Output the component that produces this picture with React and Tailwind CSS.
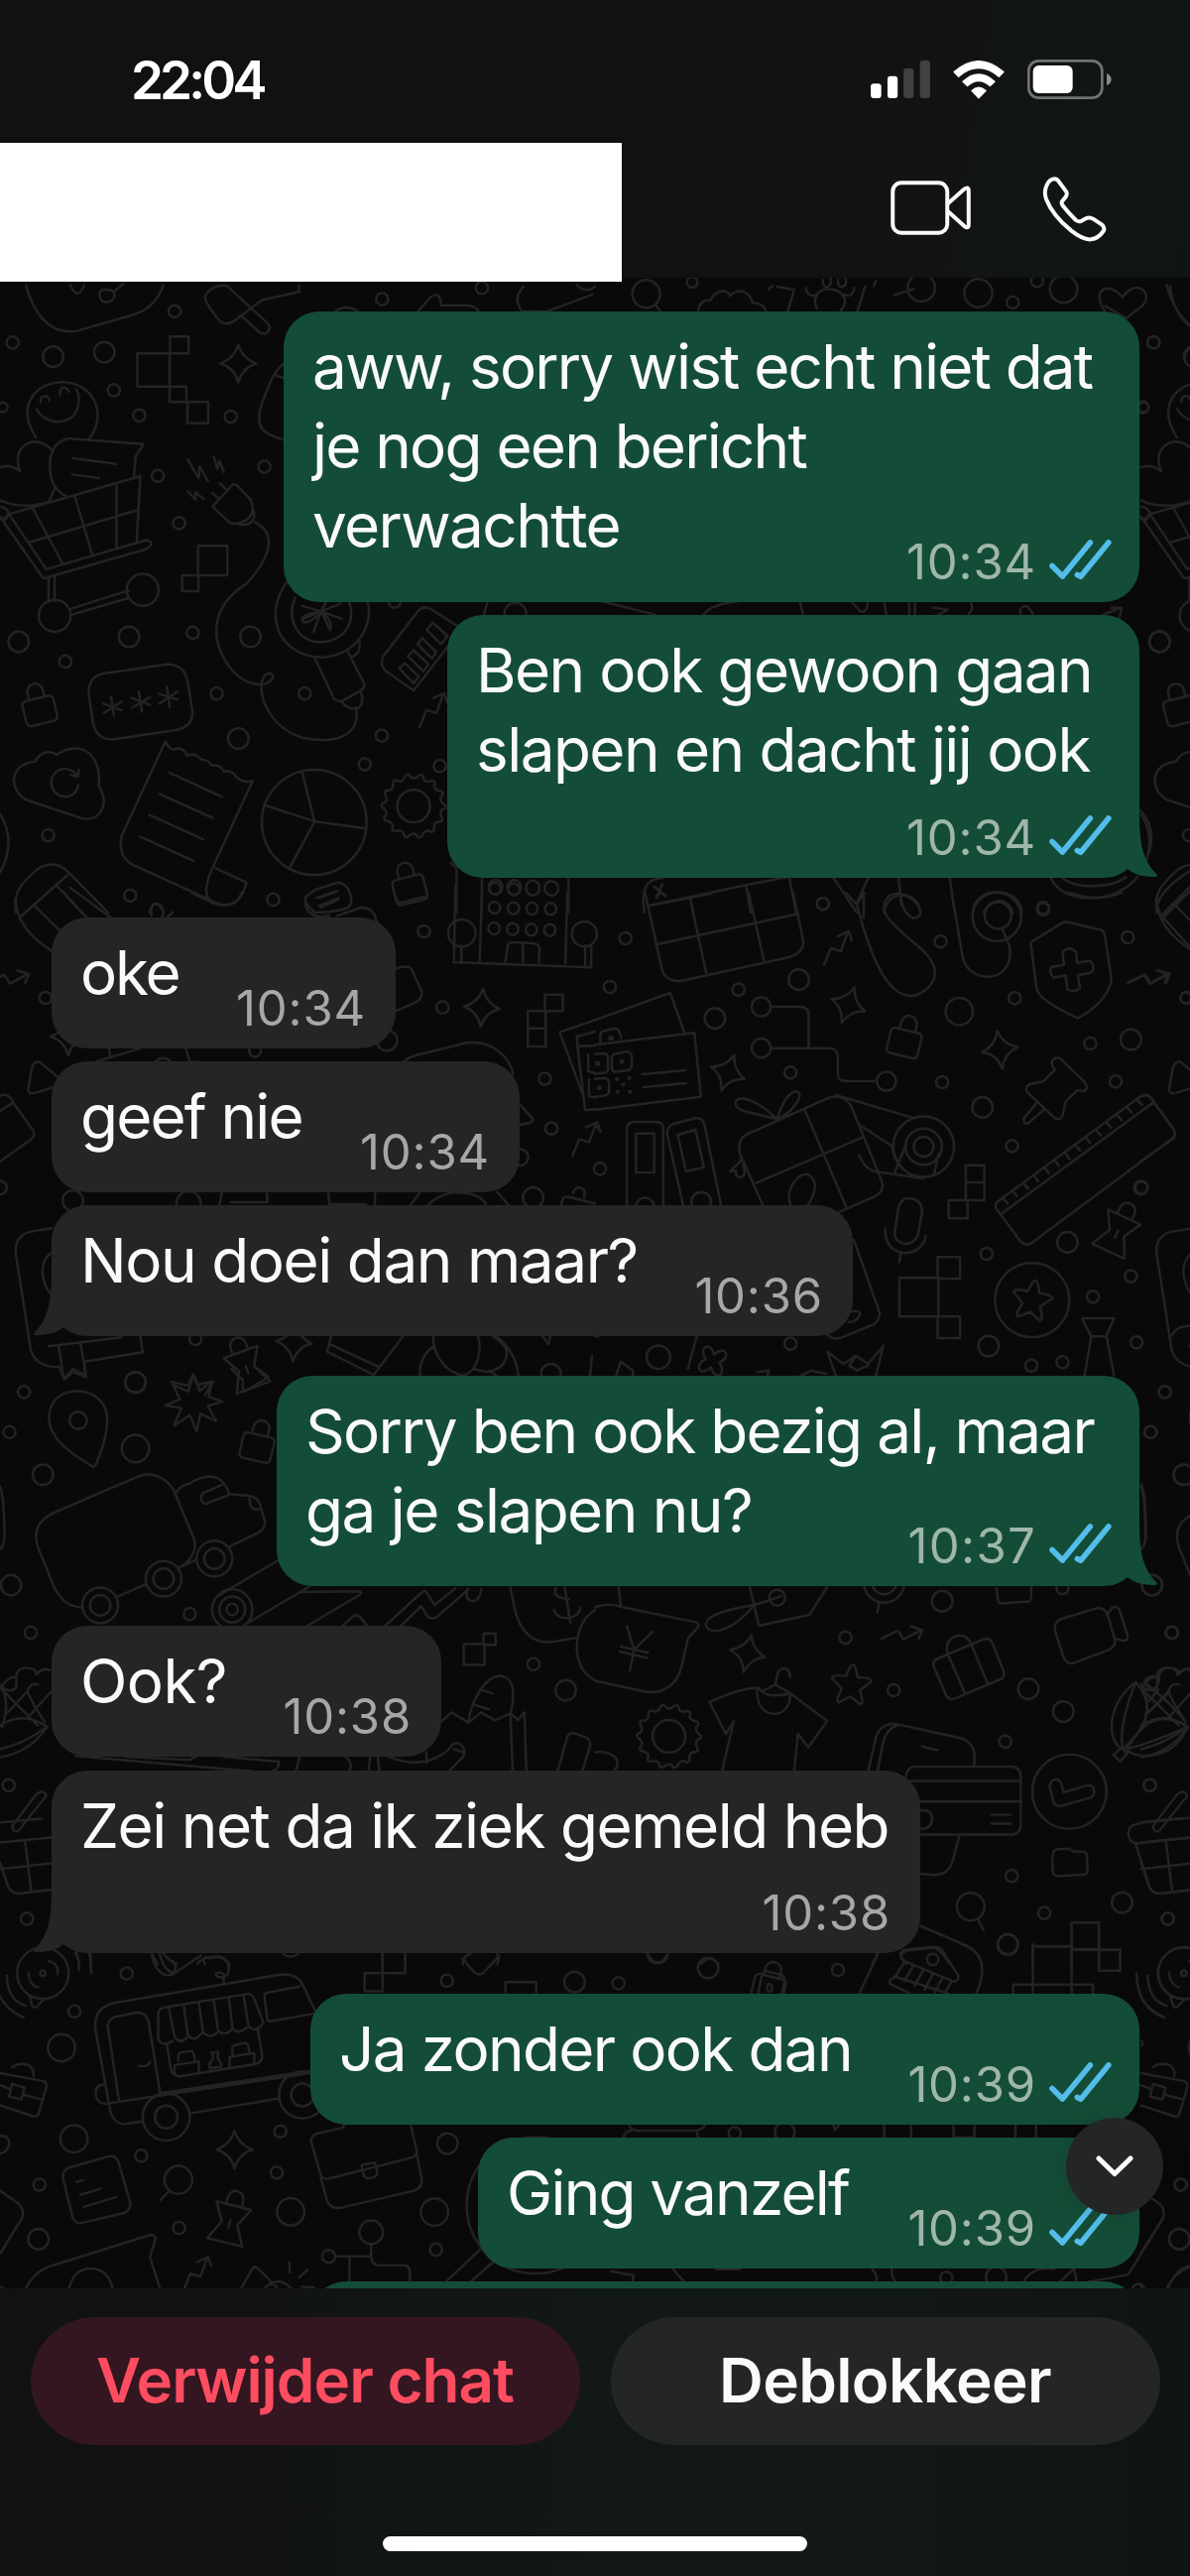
import React from "react";

/* ---------- wallpaper ---------- */

// Each wallpaper tile has its own origin and drawing scale.
const TILES = {
  a: { x: 0, y: 280, sx: 2.6133, sy: 2.45 },
  b: { x: 600, y: 280, sx: 2.6133, sy: 2.45 },
  c: { x: 0, y: 900, sx: 2.6133, sy: 3 },
  d: { x: 600, y: 900, sx: 2.6133, sy: 3 },
  e: { x: 0, y: 1380, sx: 2.6133, sy: 2.6133 },
  f: { x: 600, y: 1380, sx: 2.6133, sy: 2.6133 },
  g: { x: 0, y: 1960, sx: 2.6133, sy: 2.4615 },
  h: { x: 600, y: 1960, sx: 2.6133, sy: 2.4615 },
};

const SHAPES = {
  sparkle: "M0 -19Q4 -5 18 0Q4 4 0 19Q-4 4 -18 0Q-4 -5 0 -19Z",
  lock: "M-11 -8H11Q16 -8 16 -3V13Q16 18 11 18H-11Q-16 18 -16 13V-3Q-16 -8 -11 -8ZM-8 -8V-15A8 8 0 0 1 8 -15V-8",
  trend: "M-14 17L-7 0L3 3L10 -16M0 -12L11 -17L14 -8",
  pin: "M-18 -18H18L8 0L18 20H-18L-8 0ZM-8 -18V-25A8 8 0 0 1 8 -25V-18M0 -3V5",
  lens: "M14 0A14 14 0 1 1 -14 0A14 14 0 1 1 14 0ZM7 12L13 24",
  clover: "M0 -6C-8 -20 -18 -8 -7 0C-18 10 -8 20 0 7C8 20 18 10 7 0C18 -8 8 -20 0 -6Z",
  star: "M0 -20Q2 -21 6 -8Q19 -9 20 -5L9 5Q15 18 11 19L0 12L-11 19Q-15 18 -9 5L-20 -5Q-19 -9 -6 -8Q-2 -21 0 -20Z",
};

// Gear outline: a ring of rounded teeth.
const TEETH = 14;
const polar = (r, i) => {
  const a = (i / TEETH) * Math.PI * 2;
  return `${(r * Math.sin(a)).toFixed(2)} ${(-r * Math.cos(a)).toFixed(2)}`;
};
const GEAR =
  `M${polar(28, 0)}` +
  Array.from({ length: TEETH }, (_, i) => `Q${polar(28.5, i + 0.25)} ${polar(31.5, i + 0.4)}Q${polar(33.5, i + 0.6)} ${polar(31, i + 0.7)}Q${polar(28, i + 0.8)} ${polar(28, i + 1)}`).join("") +
  "Z";

const STAMPS = [
  ["sparkle", "a", 628, 212, 0], ["lock", "a", 102, 1058, -14], ["lock", "a", 1077, 1500, -14],
  ["trend", "a", 1142, 1068, 0], ["trend", "c", 25, 262, 42], ["lens", "b", 135, 40, -10],
  ["sparkle", "c", 180, 435, 0], ["sparkle", "c", 1270, 348, 4],
  ["sparkle", "d", 667, 340, 20], ["sparkle", "d", 350, 545, 20], ["sparkle", "d", 1067, 475, -8],
  ["lock", "d", 818, 440, 14], ["trend", "d", 640, 168, 0], ["trend", "d", 1460, 262, 42],
  ["trend", "c", 1545, 745, 0], ["pin", "d", 1375, 1030, 25], ["pin", "c", 650, 1440, -20],
  ["sparkle", "c", 775, 1360, 4], ["clover", "d", 310, 1415, 15], ["star", "d", 1152, 1232, 10],
  ["lock", "e", 680, 195, 13], ["sparkle", "f", 402, 750, 12], ["star", "f", 675, 832, 5],
  ["trend", "f", 812, 702, 42], ["lens", "f", 990, 1417, 0], ["lens", "g", 470, 585, 70],
  ["sparkle", "g", 618, 510, 0], ["pin", "g", 605, 692, 14], ["trend", "g", 520, 818, 0],
  ["lock", "h", 460, 100, 14],
];

// [tile, x, y, radius] in tile units
const RINGS = [
  ...[[460,83,16],[33,160,16],[140,195,27],[275,184,27],[300,278,16],[367,340,16],[608,343,16],[416,489,16],[472,606,16],[697,467,16],[7,320,13],[49,899,27],[340,887,27],[172,948,16],[508,877,16],[660,887,27],[571,1027,16],[803,1027,16],[628,1138,27],[1006,1131,16],[961,1202,16],[1159,1206,16],[127,1377,16],[343,1526,16],[720,1536,16],[1007,53,16],[1270,25,16],[1040,800,16],[1358,830,29],[1090,1305,43],[144,835,42],[376,771,42]].map((p) => ["a", ...p]),
  ...[[1101,61,16],[256,11,14],[1010,38,37],[860,25,36],[1235,28,36],[1165,8,16],[1472,160,16],[1443,320,16],[1488,899,27],[600,1546,16],[1181,1556,16]].map((p) => ["b", ...p]),
  ...[[1117,117,16],[1166,347,16],[1436,563,16],[1453,713,16],[1405,922,27],[1020,447,27],[192,931,27],[357,1480,27],[515,1350,16],[120,318,16],[0,892,18],[672,478,16],[497,940,32],[1370,800,22],[430,530,26],[1452,1455,26],[1217,122,36],[1540,125,33]].map((p) => ["c", ...p]),
  ...[[80,138,16],[39,285,16],[378,293,16],[537,263,27],[316,380,27],[601,34,16],[911,148,16],[1181,50,16],[1404,135,16],[1106,319,16],[960,359,36],[1305,456,16],[1412,444,27],[1372,571,16],[1557,318,14],[515,544,16],[915,573,16],[1021,649,27],[1099,766,16],[1440,892,16],[1245,1057,27],[1032,1092,16],[1412,1160,16],[1312,1222,16],[1427,1360,16],[1037,1371,27],[1150,1430,16],[1232,1420,16],[515,1364,16],[167,1405,31],[13,835,16],[438,345,25],[438,470,25],[768,570,25],[1059,73,64],[1062,69,35],[866,768,80],[866,768,48],[866,768,26],[1152,1232,98],[132,950,24],[280,935,26]].map((p) => ["d", ...p]),
  ...[[63,61,16],[25,167,16],[357,36,27],[206,136,23],[357,210,36],[113,279,27],[29,570,27],[81,695,16],[500,646,16],[23,1097,16],[71,1449,16],[264,623,47],[264,623,27],[431,553,47],[431,553,27],[565,500,47],[565,500,27],[612,634,53],[612,634,34],[612,634,15],[1406,778,16],[1491,847,27]].map((p) => ["e", ...p]),
  ...[[1502,61,16],[1465,167,16],[1552,279,27],[1468,570,27],[1521,695,16],[915,612,27],[660,708,16],[787,847,16],[1142,843,27],[1234,903,27],[1081,982,16],[1462,1097,16],[1098,1336,16],[1184,1434,16],[1389,1406,27],[1510,1449,16],[1088,1517,27],[1250,1114,98],[1232,578,16],[480,603,21],[762,562,54],[762,562,32],[195,968,43]].map((p) => ["f", ...p]),
  ...[[334,73,16],[196,167,16],[162,257,36],[195,483,36],[104,597,16],[372,525,16],[739,465,16],[729,567,16],[766,664,36],[101,732,27],[472,704,16],[1178,91,16],[1514,94,27],[1179,495,27],[1145,665,36],[1149,758,16],[978,715,31],[866,775,17],[438,429,62],[438,429,30],[797,374,62],[797,374,30],[113,72,7],[113,72,68],[1410,648,180]].map((p) => ["g", ...p]),
  ...[[62,97,16],[298,59,27],[165,22,27],[640,64,16],[368,469,16],[500,467,26],[926,828,16],[1057,826,27],[1544,597,16],[1540,732,27],[1552,72,7],[1552,72,68],[890,38,15],[1088,0,26],[1432,858,16]].map((p) => ["h", ...p]),
];

const LINES = {
  a: [
    "M68 18C90 90 130 140 200 132L350 92Q410 75 430 18M185 18Q205 60 222 18M262 40Q265 25 285 30Q302 30 302 45Q295 62 278 60Q264 60 262 40M300 35L325 15",
    "M598 20Q560 15 540 45Q538 60 580 108Q597 120 620 105L690 55L788 35V20M598 20L708 115Q716 130 700 138Q688 140 680 132L634 92",
    "M885 82Q910 65 942 82M1102 82L1135 48Q1160 30 1162 68H1230Q1255 70 1262 84M1380 22Q1350 50 1375 82L1440 84L1560 42M1520 18Q1545 40 1568 22",
    "M448 145H497V187H448ZM362 187H447V269H362ZM447 269H491V307H447ZM494 307H549V359H494ZM522 662H599V735H522ZM480 735H523V774H480Z",
    "M95 395C40 315 95 258 165 258C240 258 288 330 235 398M107 307Q105 292 120 292Q130 295 130 303M158 290Q155 273 170 271Q180 274 182 282M96 325C130 375 220 365 206 285L200 275",
    "M0 468Q30 460 53 478C25 410 100 380 140 430M0 550Q60 575 130 552L145 518",
    "M180 397L378 411L358 440L353 490M180 397C120 410 130 470 135 495Q145 530 180 542M192 446L306 460M190 486L261 495",
    "M0 590L112 740Q118 745 125 740L380 672Q400 665 398 655Q390 645 378 650L122 720L24 584L370 490L360 652M88 572L165 706M198 542L243 684M307 512V664M76 654L362 574M0 565Q25 570 22 585Q10 600 0 595M24 584L12 600",
    "M186 818L340 772M190 832L336 792M128 740V800M144 738V798",
    "M495 450L524 495L526 466L548 502M563 442L573 472L578 452L590 480M495 528L515 548L516 530L536 546M580 508L598 524M560 532L575 544M560 565L612 512Q618 508 626 514L660 548Q675 580 650 598Q620 612 605 605ZM628 608C660 615 675 600 668 574M672 604C730 630 715 690 650 755C560 810 555 880 590 940C620 990 660 1010 700 1003C730 990 720 970 700 980C670 1010 700 1110 800 1137C900 1155 950 1120 938 1065",
    "M747 212C720 235 715 250 690 310C670 370 690 385 747 400M725 240L747 248",
    "M755 752C690 840 740 935 848 938C950 930 985 850 968 800M778 790C755 840 780 900 848 900C910 895 940 850 918 795M846 824L795 810M846 824L800 842M846 824L826 875M846 824L870 870Q880 850 846 824M846 824L900 842M846 824L897 805M846 824L860 800M846 824Q780 835 800 850Q820 855 846 824",
    "M830 940L880 1040Q890 1050 905 1044L950 1020Q965 1010 958 1000L915 920M948 900Q950 930 928 936M900 1046Q915 1070 945 1062Q960 1050 952 1026",
    "M1205 860L1135 818Q1115 808 1100 825L1010 935Q1000 955 1015 970L1090 1020L1185 905M1052 965L1067 952L1104 985L1090 1002ZM1075 935L1090 920L1130 955L1115 972ZM1100 905L1113 890L1150 925L1138 940ZM1125 870L1140 852L1180 885L1162 905Z",
    "M270 978L440 955Q488 955 495 1000L507 1070Q510 1110 460 1118L300 1140Q255 1142 245 1100L234 1030Q232 985 270 978ZM293 1035L300 1082M272 1052L320 1068M320 1047L274 1075M366 1022L374 1072M346 1038L395 1055M395 1036L348 1062M440 1010L447 1060M419 1028L468 1042M468 1022L420 1052",
    "M70 1290C20 1265 25 1200 92 1195Q115 1160 150 1178C210 1140 270 1175 260 1255C290 1300 265 1345 215 1335ZM206 1253C200 1295 135 1290 135 1245C140 1205 190 1205 205 1232M208 1215L205 1232L186 1228",
    "M436 1145L320 1380Q310 1430 350 1450L580 1548Q620 1555 640 1520L650 1494L568 1458M436 1145Q450 1172 465 1163Q485 1160 492 1180Q515 1172 530 1190Q550 1190 558 1205Q580 1200 590 1220Q610 1215 622 1232Q640 1250 666 1242L560 1458Q535 1510 548 1530Q560 1550 590 1550M446 1222L585 1282M420 1275L560 1334M394 1327L535 1387M369 1380L509 1440",
    "M966 1345A138 130 0 1 1 690 1345A138 130 0 1 1 966 1345M829 1343L796 1221M829 1343L702 1304M829 1343L765 1455M829 1343L960 1360",
    "M0 1325Q45 1390 0 1470M42 1568C35 1520 50 1500 100 1460Q145 1435 180 1468L285 1568M90 1548L182 1472M150 1502L215 1568M395 1568Q400 1540 418 1548L428 1560",
    "M830 1512L885 1495Q915 1490 925 1530Q930 1555 905 1560L870 1566L830 1568Q800 1545 805 1530ZM834 1532L885 1515M842 1552L892 1532",
    "M1188 1445L1203 1458V1568M1270 1480V1568M1498 1480V1568M1288 1505a16 16 0 1 0 36 0a16 16 0 1 0 -36 0M1337 1506a16 16 0 1 0 36 0a16 16 0 1 0 -36 0M1386 1507a16 16 0 1 0 36 0a16 16 0 1 0 -36 0M1435 1508a16 16 0 1 0 36 0a16 16 0 1 0 -36 0M1275 832L1285 800",
  ],
  b: [
    "M272 80C275 60 290 55 305 55C320 25 355 30 355 45C385 20 410 40 415 62C430 60 448 70 450 82M458 28L468 20M480 22L525 30L508 82M712 22L692 82M735 20L740 8M585 75C570 50 590 25 620 28C655 30 670 60 648 80M556 25Q560 50 582 42M683 25Q680 50 658 42M600 5Q600 25 612 22Q625 20 620 0M640 5Q640 25 652 22Q665 20 660 0M790 42L840 28",
    "M1345 85C1305 30 1350 5 1390 48C1430 -5 1480 45 1435 75L1400 100L1345 70M1515 20Q1525 90 1568 120M1568 175Q1550 185 1556 205",
    "M20 800L158 832M285 832Q310 805 375 800M540 800L548 832M678 802L700 825Q720 825 718 802M762 802L768 832M828 802V832M843 802V832M890 815L930 820L905 832M985 830Q1000 815 990 802M1122 832Q1115 810 1140 812L1155 832M1320 840L1345 830L1388 815L1360 815M1388 815L1382 840",
    "M1437 1315Q1480 1360 1460 1420M1200 1480C1230 1550 1370 1550 1430 1480M1230 1480C1260 1510 1360 1510 1400 1480M1480 1568Q1475 1520 1568 1465M1500 1568L1568 1505",
    "M130 1568C120 1500 140 1485 180 1482M137 1552L398 1500L520 1478M250 1530L260 1568M398 1500L410 1568M512 1482L530 1568M155 1503L186 1527M178 1498L162 1532M628 1482L690 1568M720 1482L690 1545M935 1482L948 1568M800 1482L808 1550M762 1568C770 1510 850 1510 858 1568M995 1568C1000 1500 1120 1500 1125 1568M1025 1568C1040 1530 1090 1530 1100 1568",
  ],
  c: [
    "M40 20Q45 110 135 175M55 72L120 5M90 38L160 118M165 -5L228 75M185 -15L292 75M400 70C390 20 430 25 430 60L428 75M456 58L440 75",
    "M505 0L560 30Q620 55 637 0M805 15C800 70 840 80 865 68L868 75M840 15L890 -4M845 45L892 20M888 70L950 45Q985 45 990 80L1040 180M1042 230Q1080 215 1086 235L1112 300Q1112 325 1090 335L1042 358",
    "M1038 0L1045 20Q1050 35 1070 27L1118 12M1200 -20L1196 210L1558 226V160M1270 0L1264 208M1495 0L1490 214M1216 160V208M1332 208L1338 160Q1340 148 1355 150L1405 153Q1420 155 1422 170L1420 212M1378 152V210M1542 160V222",
    ...[[1303,45],[1353,47],[1402,48],[1451,49],[1302,108],[1351,110],[1400,112],[1449,113],[1304,-12],[1354,-10]].map(([x, y]) => `M${x - 15} ${y}a15 18 0 1 0 30 0a15 18 0 1 0 -30 0`),
    "M1436 308H1483V358H1436ZM1391 358H1438V410H1391ZM1391 410H1438V465H1391Z",
    "M1568 385L1475 422L1535 608M1568 420L1520 435L1522 465L1568 462M1522 465L1542 658L1568 655M1550 490V540L1568 545M1552 565V615L1568 620",
    "M1063 512Q1075 495 1120 485L1230 454C1300 445 1345 500 1352 550M1370 640L1402 682Q1408 692 1395 696L1370 702",
    "M150 555L105 512Q92 508 85 525L74 595Q75 612 95 605L150 585M0 615Q20 600 35 635L88 720Q95 735 80 748L0 812M0 660L35 635M290 495L288 470M250 512L372 470M490 472L500 510L525 512",
    "M578 944L585 907M608 936H705L703 907M865 908L868 944M868 942H965M988 908V944M1082 944L1105 908M1128 944Q1160 910 1200 907Q1260 905 1280 940L1278 944M1310 905L1340 944M1510 908Q1520 880 1540 900L1540 922M1480 944Q1480 915 1500 920L1568 940",
    "M135 1015L80 1025Q35 1040 42 1095L78 1360C80 1410 110 1440 160 1433M135 1090Q110 1110 112 1150Q115 1190 135 1215M128 1372L320 1345M222 1418L376 1390L370 1342M155 1372L168 1470L192 1440L227 1460L212 1362",
    "M873 1342L862 1388L985 1458L1062 1342M868 1365L998 1434M1142 1342C1140 1390 1170 1450 1220 1460C1260 1450 1270 1380 1260 1342M1145 1370Q1105 1400 1106 1462M1300 1342Q1340 1370 1335 1400C1330 1440 1290 1460 1250 1440M1310 1344Q1360 1390 1366 1460M1290 1445L1310 1462M1430 1342L1445 1365L1450 1342M1560 1400L1555 1462",
    "M452 1480L495 1490L508 1458L522 1488L562 1478L540 1520",
  ],
  d: [
    "M132 0L175 225Q185 275 235 265L500 198Q555 185 548 140L522 0M140 40L308 2M250 15L293 242M405 0L445 205M160 157L535 64M162 10L172 0L186 8",
    "M660 0L690 35Q740 260 800 300Q840 330 880 285Q920 235 860 170C770 85 740 50 775 10Q795 -5 820 10C860 30 870 75 840 77Q810 65 805 5M690 35L710 0M708 75V0",
    "M940 0L968 190C980 280 1110 280 1092 160L1073 108M1250 0Q1320 30 1388 0",
    "M1568 165L1495 72Q1470 30 1485 0M1500 72L1568 -5",
    "M1148 150L1230 92Q1240 86 1250 90L1330 112Q1342 115 1343 128L1360 250C1365 300 1320 350 1272 380C1220 350 1165 320 1163 285ZM1232 180Q1250 158 1268 180L1270 212L1302 206Q1315 212 1313 232Q1312 245 1272 248L1278 288Q1262 305 1245 292L1240 250L1208 257Q1195 240 1202 225L1236 218Z",
    "M465 345H540Q563 345 563 370V468M465 470H615Q640 470 640 498V550Q640 570 665 570H742",
    "M0 385L198 303L235 422M0 460L262 424L279 617L0 656M14 455V430Q14 420 25 418L52 410Q65 410 69 440M125 549L238 537M128 588L240 576M0 488L22 486Q34 486 34 500V535Q34 545 20 545L0 548M50 488L85 480Q97 482 97 500V525Q95 537 82 538L52 542Q44 540 44 525V500Q44 490 50 488M0 563L25 560Q37 562 37 575V600Q37 612 22 614L0 617",
    "M68 507h6v6h-6ZM4 514h6v6h-6ZM8 587h6v6h-6ZM38 437h8v6h-8ZM56 562h4v4h-4ZM88 558h4v4h-4ZM72 578h4v4h-4ZM58 600h4v4h-4ZM90 600h4v4h-4Z",
    "M84 944V715Q84 693 105 693H160Q180 693 180 715V944M108 728H156V846H108ZM232 944L190 730Q190 705 210 698L265 682Q283 680 288 700L332 944M218 732L265 717L287 830L240 843ZM0 700L15 722",
    "M480 685C420 665 370 665 370 635C375 610 420 620 480 685C495 625 520 590 538 605C545 620 520 665 480 685M442 944L382 790Q372 745 405 728L620 618Q655 610 675 645L755 870Q765 905 735 920L645 965M552 655L662 950M425 878L705 740M385 800L382 815Q360 835 356 843L372 840Q368 862 385 860Q400 855 390 822M515 944C500 890 540 845 560 852C595 870 575 920 562 944",
    "M635 612L835 680M697 702L785 768M695 792Q715 845 750 845L866 864M790 845L820 760M800 815Q782 790 785 768M905 790L893 855",
    "M790 1025L800 950Q810 920 832 925Q862 930 862 965L852 1030Q845 1062 815 1062Q788 1055 790 1025M765 1015C760 1110 860 1110 872 1038M806 1090L802 1117",
    "M977 824H1026V876H977ZM977 876H1026V930H977ZM932 930H982V985H932ZM903 1102H962V1167H903ZM802 1165H905V1282H802ZM903 1282H962V1347H903Z",
    "M1060 935L1435 618Q1455 605 1468 625L1525 715Q1533 730 1520 745L1150 1060Q1135 1070 1122 1055L1060 960Q1050 948 1060 935ZM1072 970L1470 635M1075 925L1088 940M1102 903L1112 918M1130 880L1142 895M1158 857L1168 872M1185 833L1196 848M1212 810L1222 825M1238 785L1250 805M1265 762L1278 780M1292 740L1305 757M1320 717L1332 733M1348 695L1360 710M1375 672L1388 688M1402 650L1415 665M1430 628L1442 642",
    "M1205 508Q1220 490 1232 508L1290 572Q1302 590 1290 600L1270 598L1240 632L1232 675Q1225 690 1212 682L1138 602Q1132 590 1145 580L1182 570L1212 535Q1200 520 1205 508M1163 638L1130 682Q1128 700 1140 698L1185 655",
    "M682 1050L750 1270Q750 1295 735 1305L650 1345Q625 1355 612 1335M670 1268Q700 1260 698 1275Q690 1300 668 1298",
    "M1284 1290Q1284 1287 1290 1287H1368L1347 1342H1308ZM1308 1342L1290 1462M1348 1342L1368 1462",
    "M1568 1310Q1530 1310 1520 1340",
    "M0 1342L8 1342M268 1342L245 1440M55 1462L68 1418L100 1445V1462M612 1388L635 1462M612 1388L655 1425L688 1400L720 1425L760 1370L740 1462M688 1400L670 1430L690 1445L720 1430M540 1462L570 1445L610 1455M428 1450L458 1445L455 1462",
  ],
  e: [
    "M243 257C200 230 130 190 129 130C130 75 170 58 206 58C245 60 280 85 283 130C283 180 265 220 253 252Q248 260 243 257Z",
    "M510 14L526 58L559 32L550 74L586 86L548 98L570 138L528 118L518 165L500 122L458 150L478 104L436 96L474 80L456 42L496 60Z",
    "M218 630C180 625 165 615 145 580L100 470C85 420 105 400 140 380L360 285C400 265 440 290 458 320L512 450C520 480 500 510 472 524M465 325Q475 308 500 302C550 270 590 280 604 330L660 335Q680 340 685 358L698 400Q700 420 680 432L605 468M534 328L588 304M534 328Q525 340 535 352Q545 360 552 352L604 332M658 342Q655 372 682 370M470 524L518 503M306 602L386 567",
    "M732 505L575 598M655 668L815 574M792 588L950 586Q955 590 945 597L805 680",
    "M900 680L930 652Q940 645 950 655L970 680M1012 680L1110 590Q1120 582 1125 590L1145 622L1200 578M1052 682L1110 625L1125 650Q1135 662 1150 655L1235 580M1232 580Q1225 610 1245 612Q1265 612 1268 580",
    "M1345 575L1358 640C1375 700 1410 722 1450 720L1523 708M1568 635Q1520 665 1520 740Q1525 800 1568 820M1530 628C1525 665 1465 665 1460 635M1465 578C1455 600 1480 605 1500 607M1488 575L1503 668",
    "M1222 725H1277V780H1222ZM1274 697H1306V727H1274ZM1162 930L1190 905L1235 932L1268 905L1304 926L1345 908L1365 925L1382 905L1387 1058M1345 908L1351 1058M1235 930C1240 880 1280 800 1325 810C1360 820 1355 870 1345 908M1265 845L1298 855M1250 885L1288 897",
    "M1025 1022Q1120 1060 1185 1000Q1190 985 1210 987Q1230 1000 1222 1020L1185 1058M1124 1010V1038M1195 1002L1222 1010M995 1022L1000 1058M975 1022L972 1058M790 1022L780 1058M910 1022Q930 1035 922 1058M1470 1058L1495 970Q1500 955 1520 962L1545 972Q1560 980 1553 1000L1535 1058",
    "M200 1020L660 1060M330 1022L500 1030L515 1022M590 1022L735 1035Q735 1055 720 1058",
    "M0 1195L110 1185M0 1248L135 1235M0 1300L20 1360Q30 1385 55 1382L135 1372M0 1318L135 1303M66 1245L82 1375M32 1205L95 1122Q115 1105 122 1125L50 1215Q35 1225 32 1205M0 310Q10 330 12 440Q10 470 0 475",
    "M198 1540Q208 1550 208 1568M235 1540L240 1568M400 1540L415 1568M430 1540Q445 1560 465 1568M520 1568C540 1540 590 1545 605 1568M1008 1540V1568M1068 1540V1568M1220 1568Q1220 1545 1240 1542M1310 1542Q1318 1550 1310 1568M748 1542Q765 1555 785 1542M158 0L170 28L192 8L227 22L222 0M610 0L640 30V62L708 22L680 0",
    "M0 830C20 860 20 900 5 945M0 840L100 940M5 840Q15 812 42 812Q45 785 72 788Q98 790 95 805Q115 785 132 795M5 840Q30 855 42 840Q45 820 42 812M72 850L20 905M72 850Q80 825 100 832M72 850Q90 890 118 930M72 920L135 850M0 940Q60 900 124 943Q80 1010 0 1023M0 1002Q60 990 124 943",
  ],
  f: [
    "M0 628Q40 615 72 628L268 668Q278 675 268 685L245 710L228 785C215 840 170 858 130 850L0 822M62 575L68 625M84 678L103 740L152 692M103 740L92 795M68 732L140 748M66 745L137 762",
    "M408 575L432 677L565 648L612 575M480 603L420 622C340 635 290 650 292 675C300 705 360 695 420 622M480 603L490 598M748 618L744 642M1058 578L1062 610Q1063 618 1070 618L1145 613Q1150 612 1150 575",
    "M1225 660L1325 630Q1345 630 1352 650L1370 715Q1372 730 1355 740L1260 776Q1242 778 1235 760L1212 690Q1210 668 1225 660M1348 650L1362 630Q1375 622 1382 635L1404 705Q1405 718 1390 716L1370 710",
    "M892 782Q890 770 900 765L1025 712Q1040 708 1047 722L1078 800Q1080 812 1068 818L945 870Q930 872 925 860ZM930 752Q920 715 950 705Q975 695 990 722M930 752L975 855M990 722L1035 830",
    "M475 832L482 800C490 785 515 785 514 812M475 832L440 850M475 832L515 855M302 878C340 860 390 842 430 840L440 850Q460 868 515 855L612 928L562 997L535 962L525 1058M302 878L345 962L366 928L335 1058M428 842C420 930 515 925 514 862",
    "M0 1010Q30 1005 55 1025Q65 1040 52 1058M720 1058L742 965Q755 935 790 935L960 972Q1010 985 998 1045M745 1058L760 980Q770 945 800 938M862 995L902 1005M845 1048H1095Q1122 1048 1122 1075V1200Q1122 1227 1095 1227H858M820 1075Q820 1050 845 1048M830 1086H1120M856 1140H1120M858 1163Q888 1160 888 1185Q888 1212 858 1212M1045 1175H1095M1045 1198H1095M960 1230L943 1295Q930 1340 880 1332L858 1330",
    "M1198 1100Q1200 1080 1220 1082Q1228 1085 1235 1116L1295 1098Q1315 1095 1315 1112Q1318 1125 1305 1130L1228 1152Q1212 1152 1208 1140ZM1205 1285L1210 1270Q1215 1265 1230 1265L1250 1264L1262 1272H1285Q1295 1272 1296 1282L1298 1320Q1298 1330 1290 1332L1220 1337Q1208 1335 1206 1325Z",
    "M1366 1017L1388 998L1402 1014L1384 1034ZM1390 1002C1345 980 1350 880 1425 825C1470 880 1470 930 1390 1002M1390 998Q1380 940 1425 825M1400 1005C1450 915 1500 905 1562 943C1530 1020 1450 1035 1400 1005M1402 1002Q1480 980 1562 943M1448 825L1512 880L1552 925M1448 825Q1455 805 1485 812Q1490 785 1515 788Q1540 790 1538 805Q1555 785 1568 790M1448 825Q1465 850 1478 840Q1490 820 1485 812M1460 875L1485 845M1515 850L1462 902",
    "M1412 1205Q1440 1190 1568 1183M1412 1205Q1400 1225 1410 1240Q1415 1250 1430 1250L1568 1235M1425 1252L1460 1360Q1465 1385 1495 1382L1568 1374",
    "M858 1468L980 1520Q1010 1535 1020 1568M805 1545Q805 1532 820 1530L890 1523Q905 1525 935 1568M805 1545L820 1568M730 1568L745 1540M1256 1459H1328V1529H1256ZM1154 1521H1256V1568M1256 1531H1384V1568M1154 1521V1568M280 1568Q300 1540 325 1568M140 1545Q165 1585 190 1545M1440 305Q1452 330 1452 440Q1450 465 1438 475",
  ],
  g: [
    "M78 130L84 150Q92 165 102 150L118 135M75 70Q75 100 100 107M128 42Q155 48 152 75M18 78Q20 140 68 153M0 130Q20 165 62 182M200 15Q210 40 208 65M238 15L240 72",
    "M400 25C410 75 440 85 460 72L530 28M420 22C430 60 450 75 460 68Q470 50 450 40M540 50Q530 25 555 35C590 20 610 50 600 75Q580 90 568 75Q575 65 590 75V98",
    "M961 72H1008V117H961ZM1008 25V72H1068V25M1332 120V94H1413V120M1218 35L1250 70Q1262 80 1275 70L1315 30",
    "M325 447Q292 440 288 400L252 215C245 165 275 150 305 145L730 77C775 70 790 85 800 105L830 165M284 203Q285 185 305 180L360 170Q385 168 392 195L422 370L830 313M284 203L313 385M285 395L830 318M325 447L375 440M500 420L735 383M285 395Q255 400 252 370Q252 348 275 348M366 303L385 302Q392 300 395 292M697 130Q697 122 705 120L790 105M697 130L704 185Q706 193 715 191L830 172",
    "M432 157L650 124Q665 122 670 135L694 195M432 157Q418 160 417 172V235Q425 250 440 247L455 240M445 157L460 230Q475 250 492 232M484 150L495 225Q510 245 530 222M524 145L535 220Q555 235 572 220M563 138L575 215Q590 230 610 213M603 132L613 210Q630 225 650 207M642 126L655 205Q675 220 690 200M440 250L450 310Q455 328 475 328L670 298Q690 295 691 278L680 215M460 300L524 291V318M460 300V322M470 290V275Q470 270 480 268L505 265Q510 265 514 290M605 280L670 270V298M605 280V308M613 278L612 258Q612 252 622 250L645 245Q655 245 657 268M557 270L575 268M560 272L562 285Q548 295 553 308L583 304Q585 295 573 283L575 270",
    "M0 320L115 340Q125 345 122 355L102 420Q98 430 88 427L0 400M32 305Q50 292 75 300Q92 310 88 328M32 347L65 356L57 385L24 378ZM0 350L28 360M60 373L108 385",
    "M0 475Q25 475 24 495Q22 515 0 520M180 555L285 527Q305 522 312 540L343 640Q345 660 328 667L215 692Q200 695 192 680L166 580Q165 562 180 555M202 590L220 585M212 622L265 607M222 652L305 628M0 612L50 645Q65 660 58 680L0 768M0 850L10 855",
    "M68 855Q90 810 140 797L395 722Q410 720 410 732L395 777L422 855M182 855Q195 805 238 805Q285 805 297 855",
    "M820 490Q820 475 835 470L905 455M1082 448L1098 510Q1100 525 1085 530L865 582Q850 585 845 572L820 490M845 578L862 638Q870 655 895 655L1090 612Q1115 605 1111 580L1098 520M953 548L988 542L995 570Q990 580 972 581Q960 580 958 572ZM905 448V455",
    "M635 855L665 805Q672 798 680 805L730 852M695 855Q735 820 768 855M763 788V815M788 828L810 808M795 850L828 852M883 775H978V745M921 775V855M978 775Q980 797 1000 797H1065Q1080 797 1080 815V838M1175 838L1268 755M1240 838L1298 790",
  ],
  h: [
    "M430 122L440 75Q445 65 455 68L490 76Q502 82 500 92L492 122M455 108a6 6 0 1 0 10 0a6 6 0 1 0 -10 0",
    "M745 25L697 122M965 0C1020 15 1035 60 1005 122M822 16L900 8Q910 8 917 18L957 78Q960 92 945 93L818 43Q800 35 808 24ZM815 45L790 82Q770 90 780 100L830 122M838 55L815 92M865 65L842 103M890 75L868 113M915 85L895 120M940 92L922 122M788 80L930 122",
    "M1154 0V122M1154 6H1256V122M1256 14H1384V66H1328V0M1102 122V100H1312V122",
    "M1427 72Q1430 160 1500 182M1440 240Q1446 245 1440 252",
    "M90 448Q95 465 120 463H270Q290 455 290 448M75 480Q78 465 95 463M268 463L272 480M628 450L632 460L642 450M762 450V480M833 450V480M945 450V480H1000V450M1108 450V480M1162 450V480",
    "M1405 820L1300 838M42 812L102 822L98 838M205 806L235 838M730 806Q745 820 742 838M782 806Q780 825 792 838M1130 838Q1150 800 1210 806M1225 838L1262 806L1270 838M1510 855Q1530 805 1568 798M318 807H382M1497 680L1405 820",
  ],
};

function Wallpaper() {
  return (
    <svg
      className="absolute inset-0 h-full w-full fill-none stroke-[#232323] [&_path]:[vector-effect:non-scaling-stroke]"
      viewBox="0 280 1200 2027"
      strokeWidth="2.5"
      strokeLinecap="round"
      strokeLinejoin="round"
      aria-hidden="true"
    >
      <g id="doodles">
        {Object.entries(LINES).map(([key, list]) => {
          const t = TILES[key];
          return (
            <g key={key} transform={`translate(${t.x} ${t.y}) scale(${1 / t.sx} ${1 / t.sy})`}>
              {list.map((d, i) => (
                <path key={i} d={d} />
              ))}
            </g>
          );
        })}
        {RINGS.map(([key, x, y, r], i) => {
          const t = TILES[key];
          return <circle key={i} cx={t.x + x / t.sx} cy={t.y + y / t.sy} r={r / t.sx} />;
        })}
        {STAMPS.map(([shape, key, x, y, rot], i) => {
          const t = TILES[key];
          return (
            <path
              key={i}
              d={SHAPES[shape]}
              transform={`translate(${t.x + x / t.sx} ${t.y + y / t.sy}) rotate(${rot})`}
            />
          );
        })}
        <path d={GEAR} transform="translate(417 812.6)" />
        <path d={GEAR} transform="translate(674.6 1750.4)" />
      </g>
      <use href="#doodles" x="1150.5" />
    </svg>
  );
}

/* ---------- messages ---------- */

function Ticks() {
  return (
    <svg className="mb-[6px] ml-[13px] h-[41px] w-[63px]" viewBox="0 0 63 41" fill="none" stroke="#53bdeb" strokeWidth="5.6" strokeLinecap="round" strokeLinejoin="round">
      <path d="M3 26.5L13.4 37L41.3 3" />
      <path d="M28.3 35.5L31.8 37.3L59.8 3" />
    </svg>
  );
}

function Tail({ mine }) {
  return (
    <svg
      className={mine ? "absolute bottom-0 -right-[18px] h-[60px] w-[48px] fill-[#144d37]" : "absolute bottom-0 -left-[18px] h-[60px] w-[48px] -scale-x-100 fill-[#242625]"}
      viewBox="0 0 48 60"
    >
      <path d="M0 20L30 0C30.5 25 33 42 47.5 56.5Q49 59 46 59C34 59 25 57 18 51C14 54 8 58 0 59.6Z" />
    </svg>
  );
}

function Bubble({ mine, tail, box, lines, time, timeClass = "tracking-[0.8px]" }) {
  return (
    <div
      className={`relative flex shrink-0 flex-col rounded-[36px] pt-4 pl-[29px] ${mine ? "self-end bg-[#144d37] pr-[28px]" : "self-start bg-[#242625] pr-[30px]"} ${box}`}
    >
      {tail && <Tail mine={mine} />}
      <div className="relative min-h-0 flex-1 text-[62px] leading-[80px] whitespace-nowrap text-[#fafafa]">
        {lines.map(([text, spacing]) => (
          <p key={text} className={spacing}>{text}</p>
        ))}
      </div>
      <div className="relative flex shrink-0 items-end self-end pb-[16px]">
        <span className={`text-[49px] leading-[48px] ${timeClass} ${mine ? "text-[#9fb6ab]" : "text-[#a6a7a6]"}`}>{time}</span>
        {mine && <Ticks />}
      </div>
    </div>
  );
}

const MESSAGES = [
  { mine: true, box: "mt-[34px] h-[293px] w-[863px]", time: "10:34", lines: [["aww, sorry wist echt niet dat", "tracking-[-1.8px]"], ["je nog een bericht", "tracking-[-1.78px]"], ["verwachtte", "tracking-[-1.58px]"]] },
  { mine: true, tail: true, box: "mt-[13px] h-[265px] w-[698px]", time: "10:34", lines: [["Ben ook gewoon gaan", "tracking-[-1.63px]"], ["slapen en dacht jij ook", "tracking-[-1.54px]"]] },
  { box: "mt-[40px] h-[132px] w-[347px]", time: "10:34", lines: [["oke", "tracking-[-2.2px]"]] },
  { box: "mt-[13px] h-[132px] w-[472px]", time: "10:34", lines: [["geef nie", "tracking-[-1.84px]"]] },
  { tail: true, box: "mt-[13px] h-[132px] w-[808px]", time: "10:36", lines: [["Nou doei dan maar?", "tracking-[-1.43px]"]] },
  { mine: true, tail: true, box: "mt-[40px] h-[212px] w-[870px]", time: "10:37", timeClass: "tracking-[1.3px]", lines: [["Sorry ben ook bezig al, maar", "tracking-[-1.68px]"], ["ga je slapen nu?", "tracking-[-1.53px]"]] },
  { box: "mt-[40px] h-[132px] w-[393px]", time: "10:38", lines: [["Ook?", "tracking-[-0.6px]"]] },
  { tail: true, box: "mt-[14px] h-[184px] w-[876px]", time: "10:38", lines: [["Zei net da ik ziek gemeld heb", "tracking-[-1.46px]"]] },
  { mine: true, box: "mt-[41px] h-[132px] w-[836px]", time: "10:39", lines: [["Ja zonder ook dan", "tracking-[-1.64px]"]] },
  { mine: true, box: "mt-[13px] h-[132px] w-[667px]", time: "10:39", lines: [["Ging vanzelf", "tracking-[-1.8px]"]] },
];

/* ---------- header icons ---------- */

function Signal() {
  return (
    <svg className="h-[38px] w-[60px] fill-white" viewBox="54 33 181 115">
      <rect x="54" y="103" width="32" height="45" rx="9" />
      <rect x="105" y="81" width="31" height="67" rx="9" />
      <rect x="154" y="57" width="31" height="91" rx="9" fill="#404241" />
      <rect x="204" y="33" width="31" height="115" rx="9" fill="#404241" />
    </svg>
  );
}

function Wifi() {
  return (
    <svg className="h-[39px] w-[52px] fill-white stroke-white" viewBox="302 31 157 118" strokeWidth="4" strokeLinejoin="round">
      <path d="M305 66Q380 0 456 66L442 80Q380 28 319 80Z" />
      <path d="M332 95Q380 51 429 95L415 108Q380 78 346 108Z" />
      <path d="M359 123Q380 103 402 123L380 145Z" />
    </svg>
  );
}

function Battery() {
  return (
    <svg className="h-[40px] w-[85px]" viewBox="526 30 255 120">
      <rect x="530" y="34" width="222" height="112" rx="30" fill="none" stroke="#727473" strokeWidth="8" />
      <rect x="543" y="48" width="120" height="84" rx="17" fill="#fff" />
      <path d="M766 72Q780 78 780 90Q780 102 766 108Z" fill="#8a8b8b" />
    </svg>
  );
}

function VideoIcon() {
  return (
    <svg className="h-[55px] w-[81px] fill-none stroke-[#fafafa]" viewBox="54 65 243 166" strokeWidth="12" strokeLinejoin="round">
      <rect x="60" y="72" width="166" height="152" rx="26" />
      <path d="M227 136L278 91Q291 82 291 96V199Q291 213 278 204L227 158" />
    </svg>
  );
}

function PhoneIcon() {
  return (
    <svg className="h-[66px] w-[65px] fill-none stroke-[#fafafa]" viewBox="514 53 195 198" strokeWidth="12" strokeLinejoin="round">
      <path d="M551 60Q559 60 564 68L587 99Q590 106 586 113L574 128Q571 134 576 141Q592 162 616 185Q624 191 631 188L646 180Q657 174 668 181L694 198Q705 207 699 218Q684 240 661 243Q638 245 602 217Q545 170 526 121Q519 101 526 83Q534 61 551 60Z" />
    </svg>
  );
}

export default function App() {
  return (
    <div className="flex h-[2597px] w-[1200px] flex-col overflow-hidden bg-[#090909] font-['Inter',sans-serif]">
      <header className="relative z-10 flex h-[280px] shrink-0 flex-col bg-[linear-gradient(100deg,#111111_0%,#111111_55%,#111514_88%,#111414_100%)]">
        <div className="flex h-[144px] shrink-0 items-center justify-between pr-[79px] pl-[132px]">
          <time className="pt-[17px] text-[53px] leading-[60px] font-semibold tracking-[-3.9px] text-white">22:04</time>
          <div className="flex items-center gap-[23px] pt-[16px]">
            <Signal />
            <Wifi />
            <Battery />
          </div>
        </div>
        <div className="flex h-[140px] shrink-0 justify-between pr-[84px]">
          <div className="h-[140px] w-[627px] bg-white" />
          <div className="flex gap-[72px]">
            <button className="flex h-[131px] items-center" aria-label="Videogesprek"><VideoIcon /></button>
            <button className="flex h-[133px] items-center" aria-label="Bellen"><PhoneIcon /></button>
          </div>
        </div>
      </header>

      <main className="relative h-[2027px] shrink-0 overflow-hidden">
        <Wallpaper />
        <div className="relative flex flex-col pr-[51px] pl-[52px]">
          {MESSAGES.map((m, i) => (
            <Bubble key={i} {...m} />
          ))}
          <div className="mt-[13px] h-[132px] w-[836px] shrink-0 self-end rounded-[36px] bg-[#144d37]" />
        </div>
        <button className="absolute right-[27px] bottom-[74px] flex size-[98px] items-center justify-center rounded-full bg-[#242625] shadow-[0_0_30px_rgba(0,0,0,0.12)]" aria-label="Naar beneden">
          <svg className="h-[22px] w-[38px]" viewBox="0 0 38 22" fill="none" stroke="#fff" strokeWidth="5" strokeLinecap="round" strokeLinejoin="round">
            <path d="M3 3L19 18.5L35 3" />
          </svg>
        </button>
      </main>

      <footer className="flex h-[290px] shrink-0 flex-col items-center bg-[linear-gradient(90deg,#111111_0%,#111313_22%,#121816_50%,#121816_75%,#101313_100%)] pt-[29px]">
        <div className="flex w-[1139px] justify-between">
          <button className="h-[129px] w-[554px] rounded-full bg-[#331620] pb-[2px] text-[62px] font-semibold tracking-[-1.01px] text-[#fe4d60]">Verwijder chat</button>
          <button className="h-[129px] w-[554px] rounded-full bg-[#242625] pb-[2px] text-[62px] font-semibold tracking-[-0.63px] text-[#fafafa]">Deblokkeer</button>
        </div>
        <div className="mt-[92px] h-[15px] w-[428px] rounded-full bg-white" />
      </footer>
    </div>
  );
}
